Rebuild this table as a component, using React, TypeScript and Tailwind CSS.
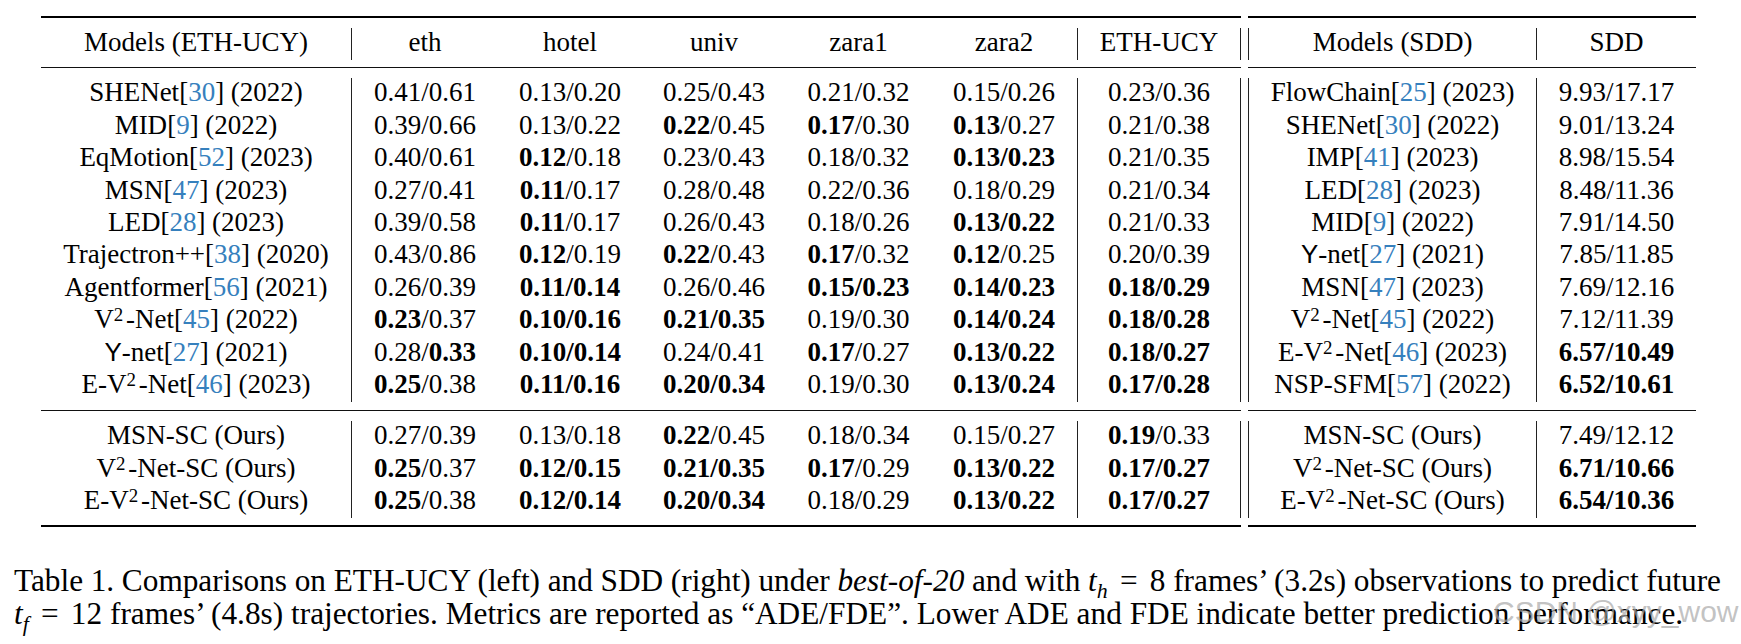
import React from 'react'

type Row = { name: string; cite?: string; year?: string; ours?: boolean; vals: string[] }

const LEFT: Row[] = [
  { name: 'SHENet', cite: '30', year: '2022', vals: ['0.41/0.61', '0.13/0.20', '0.25/0.43', '0.21/0.32', '0.15/0.26', '0.23/0.36'] },
  { name: 'MID', cite: '9', year: '2022', vals: ['0.39/0.66', '0.13/0.22', '**0.22**/0.45', '**0.17**/0.30', '**0.13**/0.27', '0.21/0.38'] },
  { name: 'EqMotion', cite: '52', year: '2023', vals: ['0.40/0.61', '**0.12**/0.18', '0.23/0.43', '0.18/0.32', '**0.13/0.23**', '0.21/0.35'] },
  { name: 'MSN', cite: '47', year: '2023', vals: ['0.27/0.41', '**0.11**/0.17', '0.28/0.48', '0.22/0.36', '0.18/0.29', '0.21/0.34'] },
  { name: 'LED', cite: '28', year: '2023', vals: ['0.39/0.58', '**0.11**/0.17', '0.26/0.43', '0.18/0.26', '**0.13/0.22**', '0.21/0.33'] },
  { name: 'Trajectron++', cite: '38', year: '2020', vals: ['0.43/0.86', '**0.12**/0.19', '**0.22**/0.43', '**0.17**/0.32', '**0.12**/0.25', '0.20/0.39'] },
  { name: 'Agentformer', cite: '56', year: '2021', vals: ['0.26/0.39', '**0.11/0.14**', '0.26/0.46', '**0.15/0.23**', '**0.14/0.23**', '**0.18/0.29**'] },
  { name: 'V^2-Net', cite: '45', year: '2022', vals: ['**0.23**/0.37', '**0.10/0.16**', '**0.21/0.35**', '0.19/0.30', '**0.14/0.24**', '**0.18/0.28**'] },
  { name: 'Y-net', cite: '27', year: '2021', vals: ['0.28/**0.33**', '**0.10/0.14**', '0.24/0.41', '**0.17**/0.27', '**0.13/0.22**', '**0.18/0.27**'] },
  { name: 'E-V^2-Net', cite: '46', year: '2023', vals: ['**0.25**/0.38', '**0.11/0.16**', '**0.20/0.34**', '0.19/0.30', '**0.13/0.24**', '**0.17/0.28**'] },
]

const LEFT_OURS: Row[] = [
  { name: 'MSN-SC', ours: true, vals: ['0.27/0.39', '0.13/0.18', '**0.22**/0.45', '0.18/0.34', '0.15/0.27', '**0.19**/0.33'] },
  { name: 'V^2-Net-SC', ours: true, vals: ['**0.25**/0.37', '**0.12/0.15**', '**0.21/0.35**', '**0.17**/0.29', '**0.13/0.22**', '**0.17/0.27**'] },
  { name: 'E-V^2-Net-SC', ours: true, vals: ['**0.25**/0.38', '**0.12/0.14**', '**0.20/0.34**', '0.18/0.29', '**0.13/0.22**', '**0.17/0.27**'] },
]

const RIGHT: Row[] = [
  { name: 'FlowChain', cite: '25', year: '2023', vals: ['9.93/17.17'] },
  { name: 'SHENet', cite: '30', year: '2022', vals: ['9.01/13.24'] },
  { name: 'IMP', cite: '41', year: '2023', vals: ['8.98/15.54'] },
  { name: 'LED', cite: '28', year: '2023', vals: ['8.48/11.36'] },
  { name: 'MID', cite: '9', year: '2022', vals: ['7.91/14.50'] },
  { name: 'Y-net', cite: '27', year: '2021', vals: ['7.85/11.85'] },
  { name: 'MSN', cite: '47', year: '2023', vals: ['7.69/12.16'] },
  { name: 'V^2-Net', cite: '45', year: '2022', vals: ['7.12/11.39'] },
  { name: 'E-V^2-Net', cite: '46', year: '2023', vals: ['**6.57/10.49**'] },
  { name: 'NSP-SFM', cite: '57', year: '2022', vals: ['**6.52/10.61**'] },
]

const RIGHT_OURS: Row[] = [
  { name: 'MSN-SC', ours: true, vals: ['7.49/12.12'] },
  { name: 'V^2-Net-SC', ours: true, vals: ['**6.71/10.66**'] },
  { name: 'E-V^2-Net-SC', ours: true, vals: ['**6.54/10.36**'] },
]

function Val({ v }: { v: string }) {
  const parts = v.split('**')
  return (
    <>
      {parts.map((p, i) =>
        i % 2 ? (
          <b key={i} className="font-bold">
            {p}
          </b>
        ) : (
          <span key={i}>{p}</span>
        )
      )}
    </>
  )
}

function Name({ s }: { s: string }) {
  const parts = s.split('^2')
  return (
    <>
      {parts.map((p, i) => (
        <React.Fragment key={i}>
          {i > 0 && <sup className="top-[-0.36em] mr-[0.14em] text-[0.7em]">2</sup>}
          {p.startsWith('Y-') ? (
            <>
              <span className="font-['Liberation_Sans',sans-serif] text-[0.96em]">Y</span>
              {p.slice(1)}
            </>
          ) : (
            p
          )}
        </React.Fragment>
      ))}
    </>
  )
}

function Model({ r }: { r: Row }) {
  if (r.ours) {
    return (
      <>
        <Name s={r.name} /> (Ours)
      </>
    )
  }
  return (
    <>
      <Name s={r.name} />[<span className="text-[#3680bd]">{r.cite}</span>] ({r.year})
    </>
  )
}

function Table({
  cols,
  header,
  body,
  ours,
  side,
}: {
  cols: string
  header: string[]
  body: Row[]
  ours: Row[]
  side: 'left' | 'right'
}) {
  // where the vertical bars go
  const edge = (i: number) => {
    if (side === 'left') {
      if (i === 0) return 'border-r border-[#222]'
      if (i === 6) return 'border-l border-r border-[#222]'
      return ''
    }
    return i === 0 ? 'border-l border-r border-[#222]' : ''
  }

  const renderRows = (rows: Row[]) =>
    rows.map((r, ri) => (
      <div key={ri} className={`grid ${cols}`}>
        {[<Model key="m" r={r} />, ...r.vals.map((v, i) => <Val key={i} v={v} />)].map((c, i) => (
          <div key={i} className={`h-[32.4px] whitespace-nowrap text-center leading-[28px] ${edge(i)}`}>
            {c}
          </div>
        ))}
      </div>
    ))

  return (
    <div className="flex flex-col">
      <div className="h-[2px] bg-black" />
      <div className={`mt-[10px] grid ${cols}`}>
        {header.map((h, i) => (
          <div key={i} className={`h-[32.4px] whitespace-nowrap text-center leading-[28px] ${edge(i)}`}>
            {h}
          </div>
        ))}
      </div>
      <div className="mt-[7px] h-px bg-[#111]" />
      <div className="mt-[10px]">{renderRows(body)}</div>
      <div className="mt-[8px] h-px bg-[#111]" />
      <div className="mt-[10px]">{renderRows(ours)}</div>
      <div className="mt-[7px] h-[2px] bg-black" />
    </div>
  )
}

function Sym({ v, sub }: { v: string; sub: string }) {
  return (
    <span className="whitespace-nowrap">
      <i>t</i>
      <sub className="bottom-[-0.28em] text-[0.7em] italic">{sub}</sub>
      <span className="mx-[0.39em]">=</span>
      {v}
    </span>
  )
}

export default function App() {
  return (
    <div className="relative h-[644px] w-[1741px] overflow-hidden bg-white pt-[16px] font-['Liberation_Serif','Times_New_Roman',serif] text-black">
      <div className="flex gap-[7px] pl-[41px] text-[27px]">
        <Table
          side="left"
          cols="grid-cols-[311px_146px_144px_144px_145px_146px_164px]"
          header={['Models (ETH-UCY)', 'eth', 'hotel', 'univ', 'zara1', 'zara2', 'ETH-UCY']}
          body={LEFT}
          ours={LEFT_OURS}
        />
        <Table side="right" cols="grid-cols-[289px_159px]" header={['Models (SDD)', 'SDD']} body={RIGHT} ours={RIGHT_OURS} />
      </div>

      <div className="mt-[37px] ml-[14px] w-[1707px] text-[31.3px] leading-[33px]">
        <div className="text-justify [text-align-last:justify] [word-spacing:-3px]">
          Table 1. Comparisons on ETH-UCY (left) and SDD (right) under <i>best-of-20</i> and with{' '}
          <Sym sub="h" v="8" /> frames’ (3.2s) observations to predict future
        </div>
        <div className="whitespace-nowrap">
          <Sym sub="f" v="12" /> frames’ (4.8s) trajectories. Metrics are reported as “ADE/FDE”. Lower ADE and FDE
          indicate better prediction performance.
        </div>
      </div>

      <div className="pointer-events-none absolute left-[1493px] top-[595px] font-['Liberation_Sans',sans-serif] text-[30px] leading-[33px] text-[#a8a8a8]/70">
        CSDN @xyy_wow
      </div>
    </div>
  )
}
